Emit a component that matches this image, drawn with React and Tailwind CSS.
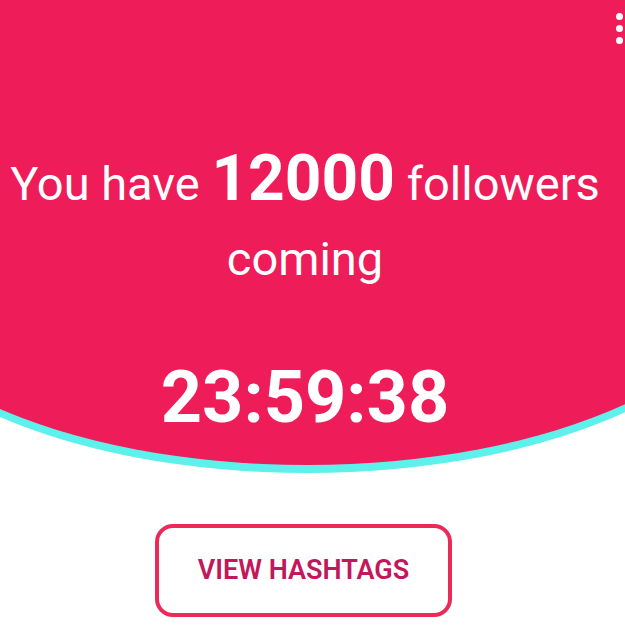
import React from 'react';

const font = { fontFamily: 'Roboto, "Noto Sans", sans-serif' };

export default function App() {
    return (
        <div className="relative w-full h-[625px] overflow-hidden bg-white" style={font}>
            {/* Curved header */}
            <div className="ml-[-143px] w-[900px] h-[465px] bg-[#ee1c59] rounded-bl-[450px_208px] rounded-br-[450px_208px] shadow-[0_8px_0_#5ef0ea]">
                <div className="ml-[143px] w-[625px] pr-[15px] pt-[141px] text-white text-center">
                    <p className="text-[47px] leading-[75px]">
                        You have <span className="text-[64px] font-bold">12000</span> followers coming
                    </p>
                    <div className="mt-[66px] text-[72px] leading-[72px] font-bold">23:59:38</div>
                </div>
            </div>

            {/* Overflow menu */}
            <div className="absolute top-[13px] right-[2px] flex flex-col gap-[5px]">
                <span className="w-[7px] h-[7px] rounded-full bg-white" />
                <span className="w-[7px] h-[7px] rounded-full bg-white" />
                <span className="w-[7px] h-[7px] rounded-full bg-white" />
            </div>

            {/* Action */}
            <div className="flex justify-center mt-[59px]">
                <button className="w-[297px] h-[93px] ml-[-18px] border-[4px] border-[#ec2a57] rounded-[18px] bg-white text-[#c2185b] text-[27px] font-semibold uppercase">
                    View Hashtags
                </button>
            </div>
        </div>
    );
}
